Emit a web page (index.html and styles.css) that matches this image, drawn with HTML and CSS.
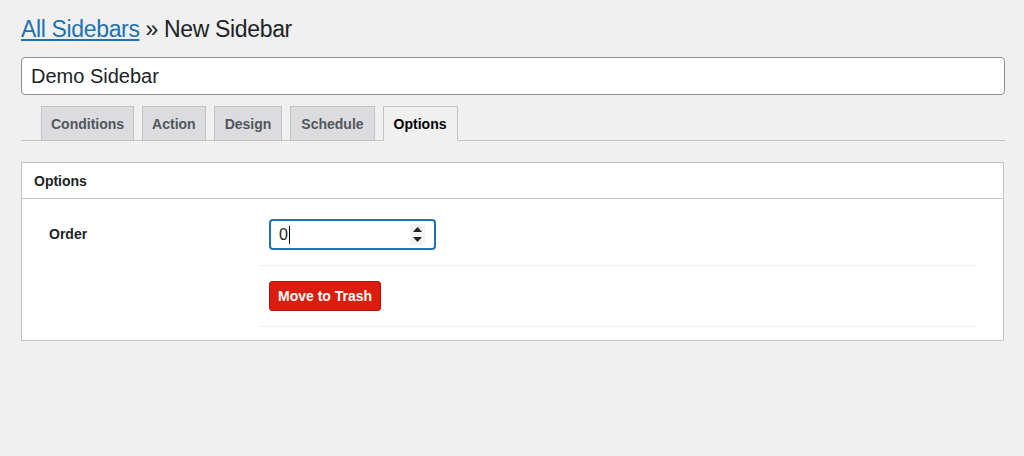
FILE: index.html
```html
<!DOCTYPE html>
<html>
<head>
<meta charset="utf-8">
<link rel="stylesheet" href="styles.css">
</head>
<body>
<div class="wrap">
  <h1 class="title"><a href="#" class="crumb">All Sidebars</a> » New Sidebar</h1>
  <div class="name-input">Demo Sidebar</div>
  <nav class="tabs">
    <span class="tab tab-tight">Conditions</span>
    <span class="tab tab-tight">Action</span>
    <span class="tab">Design</span>
    <span class="tab">Schedule</span>
    <span class="tab active">Options</span>
  </nav>
  <section class="panel">
    <header class="panel-head">Options</header>
    <div class="panel-body">
      <div class="row">
        <div class="label">Order</div>
        <div class="field">
          <div class="num-input">
            <span class="num-value">0</span><span class="caret"></span>
            <span class="spinner">
              <svg width="9" height="5" viewBox="0 0 9 5"><path d="M4.5 0 L9 5 L0 5 Z" fill="#1d2327"/></svg>
              <svg width="9" height="5" viewBox="0 0 9 5"><path d="M0 0 L9 0 L4.5 5 Z" fill="#1d2327"/></svg>
            </span>
          </div>
        </div>
      </div>
      <div class="row">
        <div class="label"></div>
        <div class="field">
          <button class="trash">Move to Trash</button>
        </div>
      </div>
    </div>
  </section>
</div>
</body>
</html>
```

FILE: styles.css
```css
html, body {
  margin: 0;
  padding: 0;
  background: #f0f0f1;
  font-family: "Liberation Sans", Arial, sans-serif;
  color: #1d2327;
}
.wrap {
  padding: 14px 19px 0 21px;
}
.title {
  margin: 0 0 13px;
  font-size: 23px;
  font-weight: 400;
  line-height: 30px;
  letter-spacing: -0.35px;
  color: #1d2327;
}
.crumb {
  color: #2271b1;
  text-decoration: underline;
  text-underline-offset: 2px;
}
.name-input {
  box-sizing: border-box;
  height: 38px;
  border: 1px solid #8c8f94;
  border-radius: 4px;
  background: #fff;
  padding: 0 9px;
  font-size: 20px;
  line-height: 36px;
  color: #1d2327;
}
.tabs {
  display: flex;
  gap: 8px;
  margin-top: 11px;
  padding-left: 20px;
  border-bottom: 1px solid #c3c4c7;
}
.tab {
  display: block;
  box-sizing: border-box;
  height: 35px;
  margin-bottom: -1px;
  padding: 0 10px;
  border: 1px solid #c3c4c7;
  background: #dcdcde;
  font-size: 14px;
  font-weight: 700;
  line-height: 34px;
  color: #50575e;
}
.tab-tight {
  padding: 0 9px;
}
.tab.active {
  background: #f0f0f1;
  border-bottom-color: #f0f0f1;
  color: #000;
}
.panel {
  margin-top: 21px;
  margin-right: 1px;
  background: #fff;
  border: 1px solid #c3c4c7;
}
.panel-head {
  height: 35px;
  border-bottom: 1px solid #c3c4c7;
  padding: 0 12px;
  font-size: 14px;
  font-weight: 700;
  line-height: 37px;
}
.panel-body {
  padding: 5px 27px 13px 27px;
}
.row {
  display: grid;
  grid-template-columns: 210px 1fr;
}
.label {
  padding: 15px 0 0 0;
  font-size: 14px;
  font-weight: 700;
  line-height: 31px;
}
.field {
  padding: 15px 10px;
  border-bottom: 1px solid #f0f0f1;
}
.num-input {
  position: relative;
  box-sizing: border-box;
  width: 167px;
  height: 31px;
  border: 2px solid #2271b1;
  border-radius: 4px;
  background: #fff;
  padding: 0 8px;
  display: flex;
  align-items: center;
  font-size: 16px;
}
.num-value {
  line-height: 20px;
}
.caret {
  display: inline-block;
  width: 1px;
  height: 18px;
  background: #000;
  margin-left: 1px;
}
.spinner {
  position: absolute;
  right: 9px;
  top: 3px;
  bottom: 3px;
  width: 15px;
  background: #f3f3f3;
  display: flex;
  flex-direction: column;
  align-items: center;
  justify-content: space-around;
  padding: 1px 0;
  box-sizing: border-box;
}
.spinner svg {
  display: block;
}
.trash {
  box-sizing: border-box;
  height: 30px;
  padding: 0 8px;
  border: 1px solid #a8170b;
  border-radius: 3px;
  background: #dc1d0c;
  color: #fff;
  font-family: "Liberation Sans", Arial, sans-serif;
  font-size: 14px;
  font-weight: 700;
  line-height: 28px;
  cursor: pointer;
}
```
